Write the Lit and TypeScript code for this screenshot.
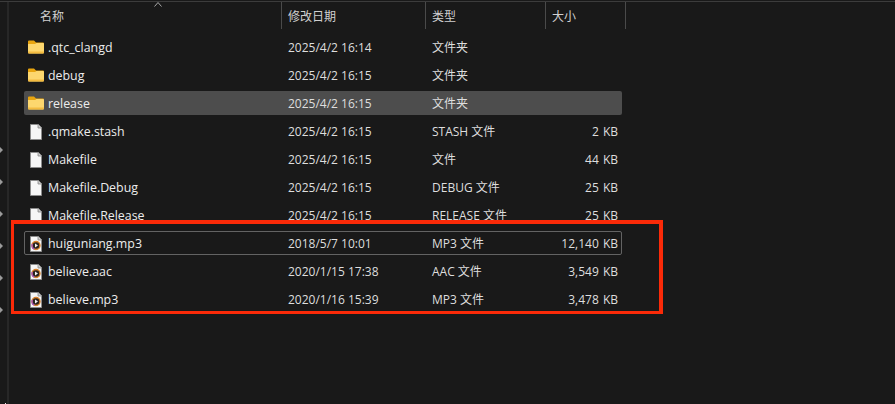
import { LitElement, html, css, svg } from "lit";
import { customElement } from "lit/decorators.js";

type Kind = "folder" | "file" | "media";
interface Row { name: string; date: string; type: string; size: string; kind: Kind; state?: string; }

const rows: Row[] = [
  { name: ".qtc_clangd", date: "2025/4/2 16:14", type: "文件夹", size: "", kind: "folder" },
  { name: "debug", date: "2025/4/2 16:15", type: "文件夹", size: "", kind: "folder" },
  { name: "release", date: "2025/4/2 16:15", type: "文件夹", size: "", kind: "folder", state: "selected" },
  { name: ".qmake.stash", date: "2025/4/2 16:15", type: "STASH 文件", size: "2 KB", kind: "file" },
  { name: "Makefile", date: "2025/4/2 16:15", type: "文件", size: "44 KB", kind: "file" },
  { name: "Makefile.Debug", date: "2025/4/2 16:15", type: "DEBUG 文件", size: "25 KB", kind: "file" },
  { name: "Makefile.Release", date: "2025/4/2 16:15", type: "RELEASE 文件", size: "25 KB", kind: "file" },
  { name: "huiguniang.mp3", date: "2018/5/7 10:01", type: "MP3 文件", size: "12,140 KB", kind: "media", state: "focused" },
  { name: "believe.aac", date: "2020/1/15 17:38", type: "AAC 文件", size: "3,549 KB", kind: "media" },
  { name: "believe.mp3", date: "2020/1/16 15:39", type: "MP3 文件", size: "3,478 KB", kind: "media" },
];

const folderIcon = svg`<svg class="icon" viewBox="0 0 16 16" width="16" height="16">
  <path d="M0 1.5a1 1 0 0 1 1-1h5l2 2h7a1 1 0 0 1 1 1v2H0z" fill="#e9a50f"/>
  <path d="M0 4h7l1.5-1H15a1 1 0 0 1 1 1v8.5a1 1 0 0 1-1 1H1a1 1 0 0 1-1-1z" fill="#fdd76e"/>
  <path d="M0 11.5h16v1a1 1 0 0 1-1 1H1a1 1 0 0 1-1-1z" fill="#f3bb40"/>
</svg>`;
const pageIcon = svg`<svg class="icon" viewBox="0 0 16 16" width="16" height="16">
  <path d="M2.5.5h8l3 3v12h-11z" fill="#f6f6f6" stroke="#8c8c8c"/>
  <path d="M10 .8v3.2h3.2" fill="#c4c4c4" stroke="#8c8c8c" stroke-width=".8"/>
</svg>`;
const mediaIcon = svg`<svg class="icon" viewBox="0 0 16 16" width="16" height="16">
  <path d="M2.5.5h8l3 3v12h-11z" fill="#f6f6f6" stroke="#8c8c8c"/>
  <path d="M10 .8v3.2h3.2" fill="#c4c4c4" stroke="#8c8c8c" stroke-width=".8"/>
  <circle cx="8" cy="9.5" r="4" fill="#2a2320" stroke="#d9822b" stroke-width="1.4"/>
  <path d="M4.3 8a4 4 0 0 0 2 5.2" fill="none" stroke="#a04ec0" stroke-width="1.4"/>
  <path d="M7 7.6l3 1.9-3 1.9z" fill="#f4f4f4"/>
</svg>`;
const icons = { folder: folderIcon, file: pageIcon, media: mediaIcon };

const headers = ["修改日期", "类型", "大小"];
const arrowTops = [150, 182, 214, 246, 278, 310];

@customElement("app-root")
export class AppRoot extends LitElement {
  static styles = css`
    :host {
      display: block;
      position: relative;
      width: 895px;
      height: 404px;
      overflow: hidden;
      background: #191919;
      color: #dedede;
      font: 12px/16px "Open Sans", "Noto Sans CJK SC", sans-serif;
    }
    .window { display: flex; height: 403px; margin-top: 1px; border-top: 1px solid #3c3c3c; box-sizing: border-box; }
    .rail { position: relative; width: 7px; margin-right: 1px; flex: none; border-right: 2px solid #272727; }
    .arrow {
      position: absolute;
      left: 0;
      width: 0;
      height: 0;
      border-left: 3px solid #9a9a9a;
      border-top: 3px solid transparent;
      border-bottom: 3px solid transparent;
    }
    .dot { position: absolute; left: 5px; bottom: 0; width: 1px; height: 1px; background: #e8e8e8; }
    .main { flex: 1; min-width: 0; }
    .head { display: flex; height: 27px; position: relative; }
    .hcell {
      box-sizing: border-box;
      border-right: 1px solid #4a4a4a;
      padding: 7px 0 0 6px;
      color: #d0d0d0;
      flex: none;
    }
    .hname { width: 272px; padding-left: 30px; }
    .hdate { width: 144px; }
    .htype { width: 120px; }
    .hsize { width: 80px; }
    .sort { position: absolute; left: 144px; top: 0; }
    .list { padding: 6px 0 0 14px; display: flex; flex-direction: column; gap: 4px; }
    .row {
      box-sizing: border-box;
      width: 598px;
      height: 24px;
      padding-top: 2px;
      border: 1px solid transparent;
      border-radius: 2px;
      display: grid;
      grid-template-columns: 263px 144px 120px 66px;
      align-items: center;
      font-size: 12px;
    }
    .row.selected { background: #4d4d4d; }
    .row.focused { border-color: #636363; }
    .name { display: flex; align-items: center; gap: 4px; padding-left: 3px; color: #ececec; font-size: 12.4px; }
    .icon { flex: none; display: block; }
    .size { text-align: right; word-spacing: 1px; }
    .mark {
      position: absolute;
      left: 11px;
      top: 220px;
      width: 652px;
      height: 94px;
      box-sizing: border-box;
      border-style: solid;
      border-color: #fb2a08;
      border-width: 4px 4px 3px 3px;
      pointer-events: none;
    }
  `;

  render() {
    return html`
      <div class="window">
        <div class="rail">
          ${arrowTops.map((t) => html`<i class="arrow" style="top:${t - 5}px"></i>`)}
          <i class="dot"></i>
        </div>
        <div class="main">
          <div class="head">
            <div class="hcell hname">名称</div>
            <div class="hcell hdate">${headers[0]}</div>
            <div class="hcell htype">${headers[1]}</div>
            <div class="hcell hsize">${headers[2]}</div>
            <svg class="sort" width="8" height="5" viewBox="0 0 8 5"><path d="M.5 4.5l3.5-4 3.5 4" fill="none" stroke="#a8a8a8"/></svg>
          </div>
          <div class="list">
            ${rows.map((r) => html`
              <div class="row ${r.state ?? ""}">
                <div class="name">${icons[r.kind]}<span>${r.name}</span></div>
                <div>${r.date}</div>
                <div>${r.type}</div>
                <div class="size">${r.size}</div>
              </div>`)}
          </div>
        </div>
      </div>
      <div class="mark"></div>
    `;
  }
}
